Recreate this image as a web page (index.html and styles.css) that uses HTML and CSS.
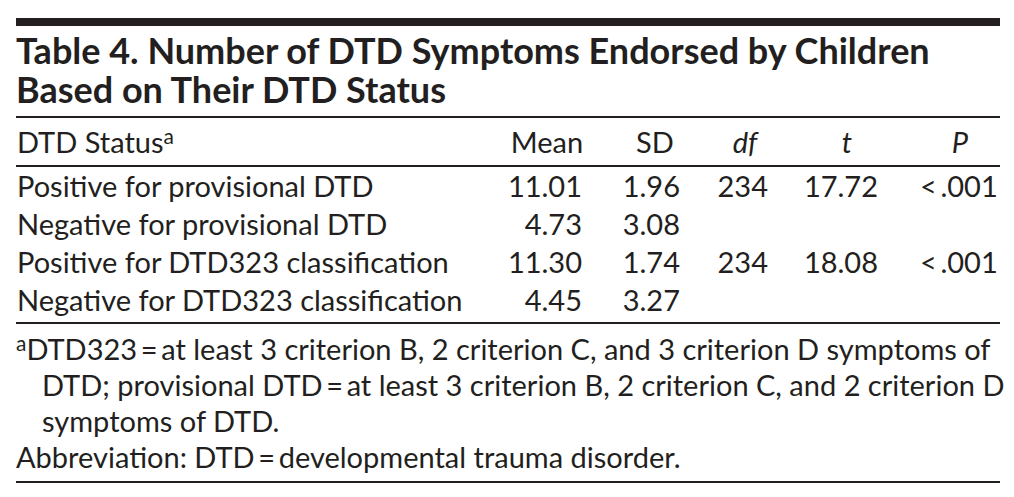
FILE: index.html
```html
<!DOCTYPE html>
<html lang="en">
<head>
<meta charset="utf-8">
<title>Table 4</title>
<link rel="stylesheet" href="styles.css">
</head>
<body>
<div class="figure">
  <div class="top-bar"></div>
  <h1 class="title"><span class="title-line">Table 4. Number of DTD Symptoms Endorsed by Children</span><span class="title-line">Based on Their DTD Status</span></h1>
  <div class="row head">
    <div class="cell label">DTD Status<sup class="sup">a</sup></div>
    <div class="cell hc">Mean</div>
    <div class="cell hc">SD</div>
    <div class="cell hc it">df</div>
    <div class="cell hc it">t</div>
    <div class="cell hc it">P</div>
  </div>
  <div class="tbody">
    <div class="row">
      <div class="cell label">Positive for provisional DTD</div>
      <div class="cell num c-mean">11.01</div>
      <div class="cell num c-sd">1.96</div>
      <div class="cell num c-df">234</div>
      <div class="cell num c-t">17.72</div>
      <div class="cell num c-p">&lt;&thinsp;.001</div>
    </div>
    <div class="row">
      <div class="cell label">Negative for provisional DTD</div>
      <div class="cell num c-mean">4.73</div>
      <div class="cell num c-sd">3.08</div>
      <div class="cell num c-df"></div>
      <div class="cell num c-t"></div>
      <div class="cell num c-p"></div>
    </div>
    <div class="row">
      <div class="cell label">Positive for DTD323 classification</div>
      <div class="cell num c-mean">11.30</div>
      <div class="cell num c-sd">1.74</div>
      <div class="cell num c-df">234</div>
      <div class="cell num c-t">18.08</div>
      <div class="cell num c-p">&lt;&thinsp;.001</div>
    </div>
    <div class="row">
      <div class="cell label">Negative for DTD323 classification</div>
      <div class="cell num c-mean">4.45</div>
      <div class="cell num c-sd">3.27</div>
      <div class="cell num c-df"></div>
      <div class="cell num c-t"></div>
      <div class="cell num c-p"></div>
    </div>
  </div>
  <div class="notes">
    <p class="note hang"><sup class="sup">a</sup>DTD323&thinsp;=&thinsp;at least 3 criterion B, 2 criterion C, and 3 criterion D symptoms of<br>DTD; provisional DTD&thinsp;=&thinsp;at least 3 criterion B, 2 criterion C, and 2 criterion D<br>symptoms of DTD.</p>
    <p class="note">Abbreviation: DTD&thinsp;=&thinsp;developmental trauma disorder.</p>
  </div>
</div>
</body>
</html>
```
FILE: styles.css
```css
html, body {
  margin: 0;
  padding: 0;
  background: #ffffff;
}

body {
  font-family: "Lato", "Open Sans", sans-serif;
  color: #231f20;
}

.figure {
  width: 984px;
  padding: 18px 16px 0 16px;
}

.top-bar {
  height: 8px;
  background: #231f20;
}

.title {
  margin: 0;
  padding: 5px 0 7px 0;
  font-size: 36px;
  line-height: 39px;
  font-weight: 700;
  white-space: nowrap;
  border-bottom: 2px solid #231f20;
}

.title-line {
  display: block;
}

.row {
  display: grid;
  grid-template-columns: 484px 94px 122px 58px 146px 80px;
  font-size: 29px;
  line-height: 38px;
}

.head {
  padding: 5px 0 4px 0;
  border-bottom: 2px solid #231f20;
}

.tbody {
  padding-bottom: 3px;
  border-bottom: 2px solid #231f20;
}

.cell {
  white-space: nowrap;
}

.label {
  padding-left: 1px;
}

.hc {
  text-align: center;
}

.it {
  font-style: italic;
}

.num {
  text-align: right;
}

.c-mean { padding-right: 12px; }
.c-sd { padding-right: 36px; }
.c-df { padding-right: 6px; }
.c-t { padding-right: 42px; }
.c-p { padding-right: 7px; }

.sup {
  font-size: 72%;
  line-height: 0;
  vertical-align: 0.45em;
}

.notes {
  padding: 7px 0 6px 0;
  border-bottom: 2px solid #231f20;
}

.note {
  margin: 0;
  font-size: 29px;
  line-height: 36px;
  white-space: nowrap;
}

.hang {
  padding-left: 26px;
  text-indent: -26px;
}
```
